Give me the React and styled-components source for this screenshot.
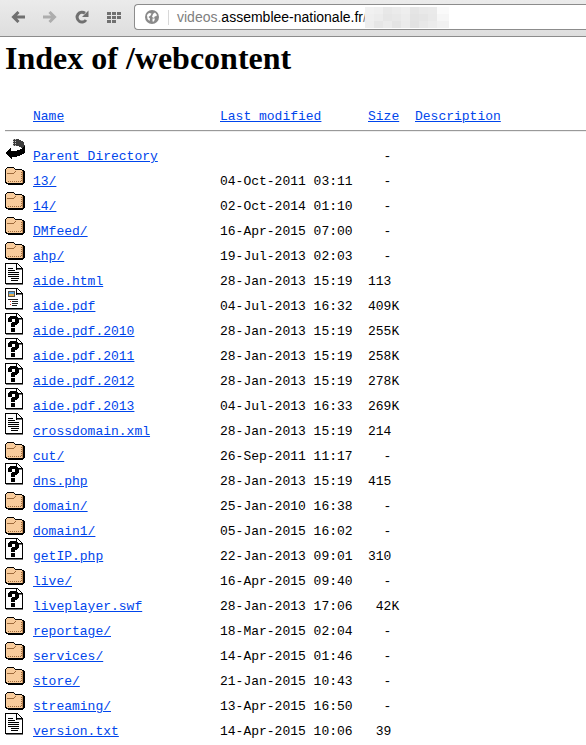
import React from 'react';
import styled, { createGlobalStyle } from 'styled-components';

const GlobalStyle = createGlobalStyle`
  body {
    margin: 0;
    background: #fff;
    color: #000;
  }
`;

const Toolbar = styled.header`
  display: flex;
  align-items: center;
  padding: 4px 0 6px 2px;
  overflow: hidden;
  background: linear-gradient(#ebebeb, #dedede);
  border-bottom: 1px solid #8c8c8c;
`;

const ToolButton = styled.button`
  display: flex;
  flex: none;
  align-items: center;
  justify-content: center;
  width: 32px;
  height: 26px;
  padding: 0;
  border: none;
  background: none;
  color: ${({ $muted }) => ($muted ? '#adadad' : '#707070')};
`;

const AddressBar = styled.div`
  display: flex;
  flex: 1;
  align-items: center;
  min-width: 0;
  height: 26px;
  box-sizing: border-box;
  margin-left: 4px;
  padding-left: 10px;
  border: 1px solid #8c8c8c;
  border-right: none;
  border-radius: 4px 0 0 4px;
  background: #fff;
  overflow: hidden;
`;

const Address = styled.div`
  margin-left: 9px;
  padding-left: 8px;
  border-left: 1px solid #d8d8d8;
  font: 14px/15px "Liberation Sans", Arial, sans-serif;
  color: #808080;
  white-space: nowrap;
`;

const Host = styled.span`
  color: #000;
`;

const Content = styled.main`
  padding: 3px 0 4px 5px;
`;

const Title = styled.h1`
  margin: 0 0 27px;
  font: bold 32px/37px "Liberation Serif", "Times New Roman", serif;
`;

const Listing = styled.table`
  width: 100%;
  table-layout: fixed;
  border-spacing: 0;
  font: 13px/13px "Liberation Mono", "Courier New", monospace;
  white-space: pre;
`;

const Column = styled.col`
  width: ${({ $width }) => $width};
`;

const HeadCell = styled.th`
  height: 24px;
  padding: 0 0 2px;
  border-bottom: 1px solid #999;
  box-shadow: 0 1px #eee;
  font-weight: normal;
  text-align: left;
  vertical-align: middle;
`;

const Row = styled.tr`
  height: 25px;

  &:first-child {
    height: 32px;
  }
`;

const Cell = styled.td`
  padding: 0;
  vertical-align: bottom;
`;

const IconCell = styled(Cell)`
  padding-bottom: 3px;
`;

const Link = styled.a`
  color: #0045ec;
  text-decoration: underline;
`;

const Icon = styled.svg`
  display: block;
  flex: none;
`;

// Covers the end of the address, so it starts on top of the slash
const Cover = styled(Icon)`
  margin-left: -2px;
`;

const BackIcon = () => (
  <Icon width="14" height="12" viewBox="0 0 14 12" fill="none" stroke="currentColor" strokeWidth="3">
    <path d="M14 6H3M7.500 1L2.500 6l5 5" />
  </Icon>
);

const ForwardIcon = () => (
  <Icon width="14" height="12" viewBox="0 0 14 12" fill="none" stroke="currentColor" strokeWidth="3">
    <path d="M0 6h11M6.500 1l5 5-5 5" />
  </Icon>
);

const ReloadIcon = () => (
  <Icon width="14" height="14" viewBox="0 0 14 14">
    <path d="M11 10A4.900 4.900 0 1 1 10 3.300" fill="none" stroke="currentColor" strokeWidth="3" />
    <path d="M13.500 0.500V7H7z" fill="currentColor" />
  </Icon>
);

const GridIcon = () => (
  <Icon width="14" height="11" viewBox="0 0 14 11" fill="currentColor">
    <path d="M0 0h4v3H0zM5 0h4v3H5zM10 0h4v3h-4zM0 4h4v3H0zM5 4h4v3H5zM10 4h4v3h-4zM0 8h4v3H0zM5 8h4v3H5z" />
  </Icon>
);

const GlobeIcon = () => (
  <Icon width="14" height="14" viewBox="0 0 14 14">
    <circle cx="7" cy="7" r="7" fill="#8a8a8a" />
    <path d="M2 5l2-2 2.500.5-1 2L3.500 7 5 8.500 4.500 11 2.500 9zM8 4l2-1.500L12 5l-1 1.500L10 6l-1 2-2-1zM7.500 8.500h2.500L9 11.500H7.500z" fill="#fff" />
  </Icon>
);

const MOSAIC = [
  ['#f1f1f1', '#efefef', '#e8e8e8', '#ebebeb', '#eeeeee', '#e5e5e5', '#e9e9e9', '#eaeaea', '#fafafa'],
  ['#efefef', '#ececec', '#e6e6e6', '#e8e8e8', '#ececec', '#e3e3e3', '#e5e5e5', '#e9e9e9', '#f6f6f6'],
  ['#eeeeee', '#e6e6e6', '#ebebeb', '#e4e4e4', '#ebebeb', '#e2e2e2', '#e8e8e8', '#ececec', '#f1f1f1'],
];

const Mosaic = () => (
  <Cover width="84" height="21" viewBox="0 0 84 21" shapeRendering="crispEdges">
    {MOSAIC.map((shades, y) =>
      shades.map((shade, x) => (
        <rect key={`${x}-${y}`} x={x * 9} y={y * 7} width="12" height="7" fill={shade} />
      ))
    )}
  </Cover>
);

const UpIcon = () => (
  <Icon width="20" height="22" viewBox="0 0 20 22" shapeRendering="crispEdges">
    <path d="M8 1h5l4 2 2 2 1 3v1l-3 1-4-2H8z" fill="#3c3c3c" />
    <path d="M8.500 1v7M10.500 1v7" stroke="#c4c4c4" strokeDasharray="1 1" />
    <path d="M0 15l6-5v3h5l5-2 4-3v6l-2 2-4 2-5 1H7v2H6z" />
  </Icon>
);

const FolderIcon = () => (
  <Icon width="20" height="22" viewBox="0 0 20 22" shapeRendering="crispEdges">
    <path d="M2 4h7v1h1v1h7v1h2v1h1v12h-1v1h-1v1H3v-1H1v-1H0V6h1V5h1z" />
    <path d="M2 5h7v1h1v1h7v1h1v10h-1v2H2v-1H1V6h1z" fill="#f8cc9c" />
    <path d="M2 10.500h7M9 9.500h1M10 8.500h1" stroke="#9c6a3c" />
    <path d="M3 18.500h14" stroke="#9c6a3c" strokeDasharray="1 1" />
    <path d="M16.500 9v9" stroke="#9c6a3c" strokeDasharray="1 1" />
    <path d="M17 8h1v12h-1z" fill="#c08a58" />
  </Icon>
);

const Sheet = ({ children }) => (
  <Icon width="20" height="22" viewBox="0 0 20 22" shapeRendering="crispEdges">
    <path d="M0 0h13v1h1v1h1v1h1v1h1v1h1v17H1v-1H0z" />
    <path d="M1 1h10v6h6v13H1z" fill="#fff" />
    <path d="M12 1h1v1h1v1h1v1h1v1h-4z" fill="#fff" />
    <path d="M12 6.500h5M1 21.500h17" stroke="#777" />
    {children}
  </Icon>
);

const TextIcon = () => (
  <Sheet>
    <path
      d="M3 5.500h5M3 7.500h7M3 9.500h11M3 11.500h11M3 13.500h11M6 15.500h8M6 17.500h7"
      stroke="#000"
    />
  </Sheet>
);

const PdfIcon = () => (
  <Sheet>
    <path d="M3 3h7v6H3z" fill="#555" />
    <path d="M4 4h5v2H4z" fill="#5ba4dc" />
    <path d="M4 6h5v2H4z" fill="#e9b04c" />
    <path d="M3 11.500h10M7 13.500h6M7 15.500h6M7 17.500h5" stroke="#222" />
    <path d="M5 13.500h1M5 16.500h1" stroke="#e03020" />
  </Sheet>
);

const UnknownIcon = () => (
  <Sheet>
    <path d="M5 3h7v1h1v1h1v5h-1v1h-1v1h-2v2H6v-4h1V9h3V6H7v3H3V5h1V4h1zM6 15h4v4H6z" />
  </Sheet>
);

const ICONS = {
  up: UpIcon,
  folder: FolderIcon,
  text: TextIcon,
  pdf: PdfIcon,
  unknown: UnknownIcon,
};

const LABELS = { up: 'Parent', folder: 'Folder', text: 'Text', pdf: 'PDF', unknown: 'Unknown' };

// Sizes keep the server's padding: four characters, right aligned, with the unit last
const FILES = [
  ['up', 'Parent Directory', '', '  - '],
  ['folder', '13/', '04-Oct-2011 03:11', '  - '],
  ['folder', '14/', '02-Oct-2014 01:10', '  - '],
  ['folder', 'DMfeed/', '16-Apr-2015 07:00', '  - '],
  ['folder', 'ahp/', '19-Jul-2013 02:03', '  - '],
  ['text', 'aide.html', '28-Jan-2013 15:19', '113 '],
  ['pdf', 'aide.pdf', '04-Jul-2013 16:32', '409K'],
  ['unknown', 'aide.pdf.2010', '28-Jan-2013 15:19', '255K'],
  ['unknown', 'aide.pdf.2011', '28-Jan-2013 15:19', '258K'],
  ['unknown', 'aide.pdf.2012', '28-Jan-2013 15:19', '278K'],
  ['unknown', 'aide.pdf.2013', '04-Jul-2013 16:33', '269K'],
  ['text', 'crossdomain.xml', '28-Jan-2013 15:19', '214 '],
  ['folder', 'cut/', '26-Sep-2011 11:17', '  - '],
  ['unknown', 'dns.php', '28-Jan-2013 15:19', '415 '],
  ['folder', 'domain/', '25-Jan-2010 16:38', '  - '],
  ['folder', 'domain1/', '05-Jan-2015 16:02', '  - '],
  ['unknown', 'getIP.php', '22-Jan-2013 09:01', '310 '],
  ['folder', 'live/', '16-Apr-2015 09:40', '  - '],
  ['unknown', 'liveplayer.swf', '28-Jan-2013 17:06', ' 42K'],
  ['folder', 'reportage/', '18-Mar-2015 02:04', '  - '],
  ['folder', 'services/', '14-Apr-2015 01:46', '  - '],
  ['folder', 'store/', '21-Jan-2015 10:43', '  - '],
  ['folder', 'streaming/', '13-Apr-2015 16:50', '  - '],
  ['text', 'version.txt', '14-Apr-2015 10:06', ' 39 '],
];

const FileRow = ({ type, name, modified, size }) => {
  const TypeIcon = ICONS[type];

  return (
    <Row>
      <IconCell aria-label={LABELS[type]}><TypeIcon /></IconCell>
      <Cell><Link href={type === 'up' ? '../' : name}>{name}</Link></Cell>
      <Cell>{modified}</Cell>
      <Cell>{size}</Cell>
      <Cell />
    </Row>
  );
};

export default function App() {
  return (
    <>
      <GlobalStyle />
      <Toolbar>
        <ToolButton aria-label="Back"><BackIcon /></ToolButton>
        <ToolButton aria-label="Forward" $muted><ForwardIcon /></ToolButton>
        <ToolButton aria-label="Reload"><ReloadIcon /></ToolButton>
        <ToolButton aria-label="Speed dial"><GridIcon /></ToolButton>
        <AddressBar>
          <GlobeIcon />
          <Address>videos.<Host>assemblee-nationale.fr</Host>/</Address>
          <Mosaic />
        </AddressBar>
      </Toolbar>
      <Content>
        <Title>Index of /webcontent</Title>
        <Listing>
          <colgroup>
            <Column $width="28px" />
            <Column $width="187px" />
            <Column $width="148px" />
            <Column $width="47px" />
            <Column />
          </colgroup>
          <thead>
            <tr>
              <HeadCell />
              <HeadCell><Link href="?C=N;O=D">Name</Link></HeadCell>
              <HeadCell><Link href="?C=M;O=A">Last modified</Link></HeadCell>
              <HeadCell><Link href="?C=S;O=A">Size</Link></HeadCell>
              <HeadCell><Link href="?C=D;O=A">Description</Link></HeadCell>
            </tr>
          </thead>
          <tbody>
            {FILES.map(([type, name, modified, size]) => (
              <FileRow key={name} type={type} name={name} modified={modified} size={size} />
            ))}
          </tbody>
        </Listing>
      </Content>
    </>
  );
}
